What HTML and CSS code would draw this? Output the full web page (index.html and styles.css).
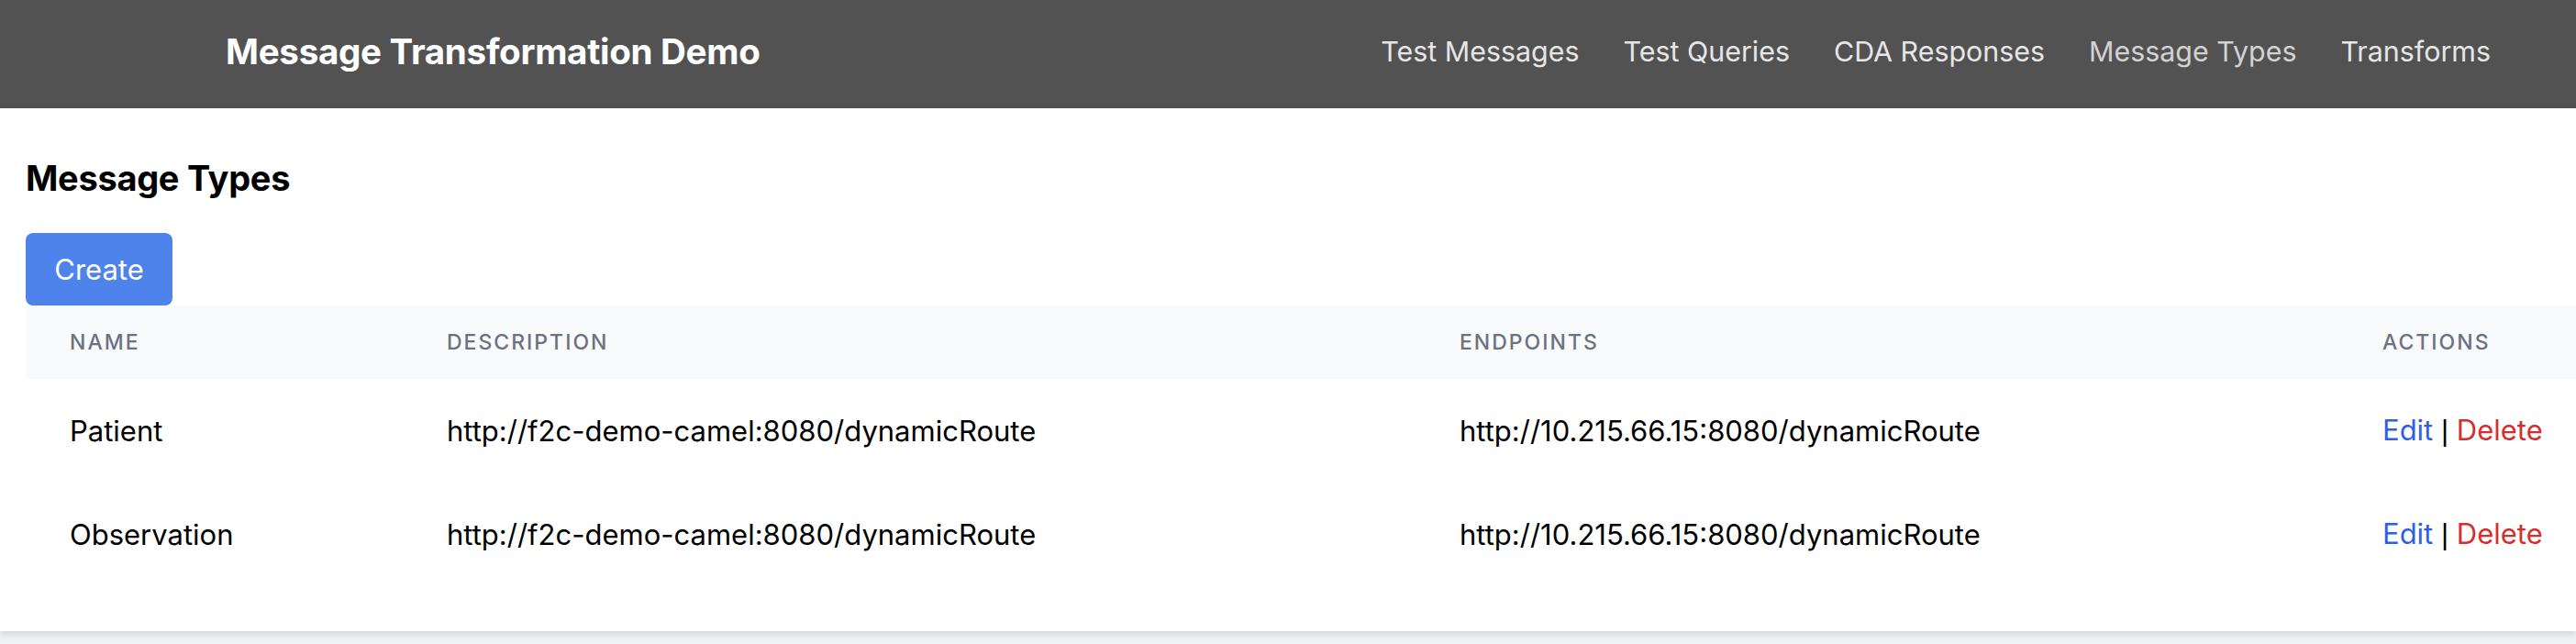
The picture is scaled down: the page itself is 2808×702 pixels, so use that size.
FILE: index.html
```html
<!DOCTYPE html>
<html lang="en">
<head>
<meta charset="utf-8">
<title>Message Transformation Demo</title>
<link rel="stylesheet" href="styles.css">
</head>
<body>
<header class="topbar">
  <div class="brand">Message Transformation Demo</div>
  <nav class="nav">
    <a class="nav-link" href="#">Test Messages</a>
    <a class="nav-link" href="#">Test Queries</a>
    <a class="nav-link" href="#">CDA Responses</a>
    <a class="nav-link nav-link-active" href="#">Message Types</a>
    <a class="nav-link" href="#">Transforms</a>
  </nav>
</header>
<main class="card">
  <h1 class="page-title">Message Types</h1>
  <button class="btn-create" type="button">Create</button>
  <table class="data-table">
    <colgroup>
      <col class="col-name">
      <col class="col-desc">
      <col class="col-end">
      <col class="col-act">
    </colgroup>
    <thead>
      <tr>
        <th>Name</th>
        <th>Description</th>
        <th>Endpoints</th>
        <th>Actions</th>
      </tr>
    </thead>
    <tbody>
      <tr>
        <td>Patient</td>
        <td>http://f2c-demo-camel:8080/dynamicRoute</td>
        <td>http://10.215.66.15:8080/dynamicRoute</td>
        <td><a class="act-edit" href="#">Edit</a> <span class="act-sep">|</span> <a class="act-delete" href="#">Delete</a></td>
      </tr>
      <tr>
        <td>Observation</td>
        <td>http://f2c-demo-camel:8080/dynamicRoute</td>
        <td>http://10.215.66.15:8080/dynamicRoute</td>
        <td><a class="act-edit" href="#">Edit</a> <span class="act-sep">|</span> <a class="act-delete" href="#">Delete</a></td>
      </tr>
    </tbody>
  </table>
</main>
</body>
</html>
```
FILE: styles.css
```css
html, body {
  margin: 0;
  padding: 0;
}
body {
  background: #f1f2f4;
  font-family: Inter, "Noto Sans", "Liberation Sans", sans-serif;
  color: #000;
  overflow-x: hidden;
  width: 2808px;
  min-height: 702px;
}
.topbar {
  height: 118px;
  background: #525252;
  display: flex;
  align-items: center;
  justify-content: space-between;
  padding: 0 93px 7px 246px;
  box-sizing: border-box;
}
.brand {
  color: #fff;
  font-weight: 700;
  font-size: 38.6px;
  line-height: 56px;
  letter-spacing: -0.3px;
}
.nav {
  display: flex;
  gap: 48px;
}
.nav-link {
  color: #e6e6e6;
  text-decoration: none;
  font-size: 30.4px;
  line-height: 48px;
}
.nav-link-active {
  color: #d2d2d2;
}
.card {
  background: #fff;
  padding: 48px 0 49px 28px;
  box-shadow: 0 3px 8px rgba(0, 0, 0, 0.14);
}
.page-title {
  margin: 0 0 32px 0;
  font-size: 38px;
  line-height: 56px;
  font-weight: 700;
  letter-spacing: -0.3px;
}
.btn-create {
  display: block;
  width: 160px;
  height: 79px;
  background: #4f83ec;
  color: #fff;
  border: 0;
  border-radius: 8px;
  font-family: inherit;
  font-size: 31px;
  padding: 0;
}
.data-table {
  width: 2789px;
  table-layout: fixed;
  border-collapse: collapse;
}
.col-name { width: 411px; }
.col-desc { width: 1104px; }
.col-end { width: 1006px; }
.col-act { width: 268px; }
.data-table th {
  background: #f9fafb;
  color: #6b7280;
  text-align: left;
  text-transform: uppercase;
  font-weight: 500;
  font-size: 23px;
  letter-spacing: 2px;
  line-height: 32px;
  padding: 24px 48px;
}
.data-table td {
  font-size: 31px;
  line-height: 48px;
  padding: 32px 48px;
  white-space: nowrap;
}
.act-edit {
  color: #2f5fe6;
  text-decoration: none;
}
.act-sep {
  color: #000;
  font-family: "Liberation Sans", sans-serif;
}
.act-delete {
  color: #d42f2f;
  text-decoration: none;
}
```
